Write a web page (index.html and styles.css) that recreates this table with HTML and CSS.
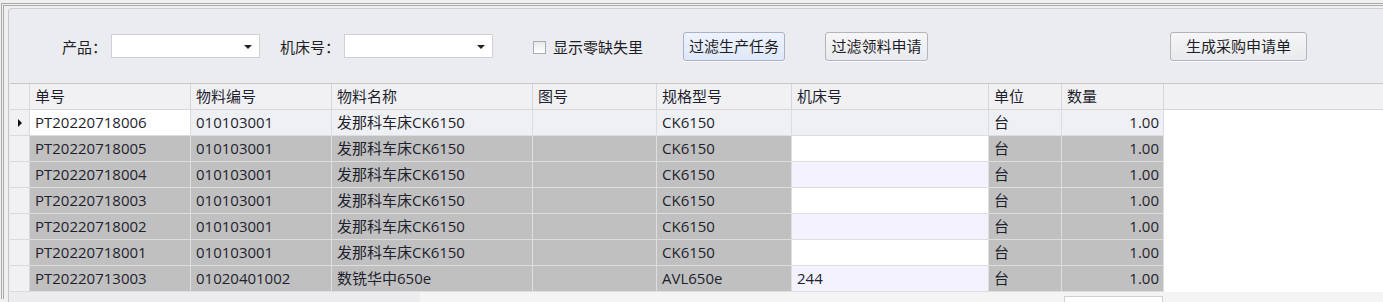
FILE: index.html
```html
<!DOCTYPE html>
<html lang="zh-CN">
<head>
<meta charset="utf-8">
<title>生产任务</title>
<link rel="stylesheet" href="styles.css">
</head>
<body>
<div class="outer">
  <div class="panel">
    <div class="toolbar">
      <span class="lbl">产品：</span>
      <div class="combo"><span class="arrow"></span></div>
      <span class="lbl lbl-machine">机床号：</span>
      <div class="combo"><span class="arrow"></span></div>
      <label class="check"><span class="box"></span>显示零缺失里</label>
      <button class="btn btn-active btn-task">过滤生产任务</button>
      <button class="btn btn-req">过滤领料申请</button>
      <button class="btn btn-gen">生成采购申请单</button>
    </div>
    <div class="grid">
      <div class="row head">
        <div class="cell ind"></div>
        <div class="cell">单号</div>
        <div class="cell">物料编号</div>
        <div class="cell">物料名称</div>
        <div class="cell">图号</div>
        <div class="cell">规格型号</div>
        <div class="cell">机床号</div>
        <div class="cell">单位</div>
        <div class="cell">数量</div>
        <div class="cell fillh"></div>
      </div>
      <div class="row cur">
        <div class="cell ind"><span class="tri"></span></div>
        <div class="cell focus">PT20220718006</div>
        <div class="cell">010103001</div>
        <div class="cell">发那科车床CK6150</div>
        <div class="cell"></div>
        <div class="cell">CK6150</div>
        <div class="cell"></div>
        <div class="cell">台</div>
        <div class="cell num">1.00</div>
        <div class="fill"></div>
      </div>
      <div class="row gray">
        <div class="cell ind"></div>
        <div class="cell">PT20220718005</div>
        <div class="cell">010103001</div>
        <div class="cell">发那科车床CK6150</div>
        <div class="cell"></div>
        <div class="cell">CK6150</div>
        <div class="cell mw"></div>
        <div class="cell">台</div>
        <div class="cell num">1.00</div>
        <div class="fill"></div>
      </div>
      <div class="row gray">
        <div class="cell ind"></div>
        <div class="cell">PT20220718004</div>
        <div class="cell">010103001</div>
        <div class="cell">发那科车床CK6150</div>
        <div class="cell"></div>
        <div class="cell">CK6150</div>
        <div class="cell ml"></div>
        <div class="cell">台</div>
        <div class="cell num">1.00</div>
        <div class="fill"></div>
      </div>
      <div class="row gray">
        <div class="cell ind"></div>
        <div class="cell">PT20220718003</div>
        <div class="cell">010103001</div>
        <div class="cell">发那科车床CK6150</div>
        <div class="cell"></div>
        <div class="cell">CK6150</div>
        <div class="cell mw"></div>
        <div class="cell">台</div>
        <div class="cell num">1.00</div>
        <div class="fill"></div>
      </div>
      <div class="row gray">
        <div class="cell ind"></div>
        <div class="cell">PT20220718002</div>
        <div class="cell">010103001</div>
        <div class="cell">发那科车床CK6150</div>
        <div class="cell"></div>
        <div class="cell">CK6150</div>
        <div class="cell ml"></div>
        <div class="cell">台</div>
        <div class="cell num">1.00</div>
        <div class="fill"></div>
      </div>
      <div class="row gray">
        <div class="cell ind"></div>
        <div class="cell">PT20220718001</div>
        <div class="cell">010103001</div>
        <div class="cell">发那科车床CK6150</div>
        <div class="cell"></div>
        <div class="cell">CK6150</div>
        <div class="cell mw"></div>
        <div class="cell">台</div>
        <div class="cell num">1.00</div>
        <div class="fill"></div>
      </div>
      <div class="row gray">
        <div class="cell ind"></div>
        <div class="cell">PT20220713003</div>
        <div class="cell">01020401002</div>
        <div class="cell">数铣华中650e</div>
        <div class="cell"></div>
        <div class="cell">AVL650e</div>
        <div class="cell ml">244</div>
        <div class="cell">台</div>
        <div class="cell num">1.00</div>
        <div class="fill"></div>
      </div>
      <div class="row foot">
        <div class="f-left"></div>
        <div class="f-box"></div>
      </div>
    </div>
  </div>
</div>
</body>
</html>
```
FILE: styles.css
```css
html, body {
  margin: 0;
  padding: 0;
}
body {
  width: 1383px;
  height: 302px;
  overflow: hidden;
  background: #f0f0f0;
  font-family: "Open Sans", "Noto Sans CJK SC", sans-serif;
  font-size: 15px;
  color: #1f1f2e;
}
.outer {
  margin: 3px 0 0 1px;
  border-top: 3px double #a9a9ad;
  border-left: 3px double #a9a9ad;
  padding: 2px 0 0 4px;
  height: 296px;
  box-sizing: border-box;
}
.panel {
  border-top: 1px solid #cbcdd3;
  border-left: 1px solid #c4c6cc;
  border-top-left-radius: 4px;
  background: #ebecf0;
  margin-right: -20px;
  padding-left: 1px;
  height: 300px;
}
.toolbar {
  height: 74px;
  display: flex;
  align-items: center;
  padding-left: 52px;
  font-family: "Noto Sans CJK SC", sans-serif;
}
.lbl {
  line-height: 20px;
  color: #1e1e28;
  padding-top: 2px;
}
.lbl-machine {
  margin-left: 20px;
}
.combo {
  width: 149px;
  height: 24px;
  box-sizing: border-box;
  margin-left: 4px;
  background: #fff;
  border: 1px solid #cfd1d6;
  display: flex;
  align-items: center;
  justify-content: flex-end;
  padding-right: 7px;
}
.arrow {
  width: 0;
  height: 0;
  border-left: 4px solid transparent;
  border-right: 4px solid transparent;
  border-top: 4px solid #222;
  margin-top: 1px;
}
.check {
  display: flex;
  align-items: center;
  margin-left: 40px;
  line-height: 20px;
  padding-top: 2px;
  color: #1e1e28;
}
.box {
  width: 13px;
  height: 13px;
  box-sizing: border-box;
  border: 1px solid #a9abb2;
  background: linear-gradient(#e9e9ec, #ffffff);
  margin-right: 7px;
}
.btn {
  height: 29px;
  box-sizing: border-box;
  border: 1px solid #b3b5bb;
  border-radius: 3px;
  background: linear-gradient(#f6f6f8, #e9eaed);
  font-family: "Noto Sans CJK SC", sans-serif;
  font-size: 15px;
  color: #1e1e28;
  padding: 0;
  line-height: 26px;
  margin-left: 40px;
  box-shadow: 0 1px 0 #f8f8fa;
}
.btn-active {
  background: linear-gradient(#eef3fd, #dfe8f9);
  border-color: #a9b3c6;
}
.btn-task { width: 102px; }
.btn-req { width: 103px; }
.btn-gen { width: 137px; margin-left: 242px; }

.grid {
  border-top: 1px solid #c5c7cc;
}
.row {
  display: grid;
  grid-template-columns: 20px 161px 141px 201px 124px 135px 197px 73px 102px 1fr;
  height: 26px;
}
.cell {
  box-sizing: border-box;
  border-right: 1px solid #dcdde0;
  border-bottom: 1px solid #dcdde0;
  padding: 0 5px;
  line-height: 25px;
  white-space: nowrap;
  overflow: hidden;
  background: #eff0f3;
}
.head .cell {
  background: #f1f1f4;
  border-color: #d6d7dc;
  font-family: "Noto Sans CJK SC", sans-serif;
  line-height: 24px;
}
.cell.ind {
  background: #f1f1f3;
  border-color: #d9dadd;
  display: flex;
  align-items: center;
  justify-content: center;
  padding: 0;
}
.tri {
  width: 0;
  height: 0;
  border-top: 4px solid transparent;
  border-bottom: 4px solid transparent;
  border-left: 4px solid #111;
}
.cur .focus {
  background: #ffffff;
}
.gray .cell {
  background: #c0c0c0;
  border-color: #dedede;
}
.gray .cell.ind {
  background: #f1f1f3;
  border-color: #d9dadd;
}
.gray .cell.mw {
  background: #ffffff;
}
.gray .cell.ml {
  background: #f3f2fe;
}
.num {
  text-align: right;
  padding-right: 4px;
}
.fill {
  background: #ffffff;
}
.foot {
  height: 10px;
  background: #f4f4f5;
}
.f-left {
  grid-column: 1 / 4;
  width: 410px;
  background: #ececee;
}
.f-box {
  grid-column: 9;
  margin: 4px 1px 0 2px;
  background: #ffffff;
  border: 1px solid #cfd0d4;
  border-bottom: none;
}
```
